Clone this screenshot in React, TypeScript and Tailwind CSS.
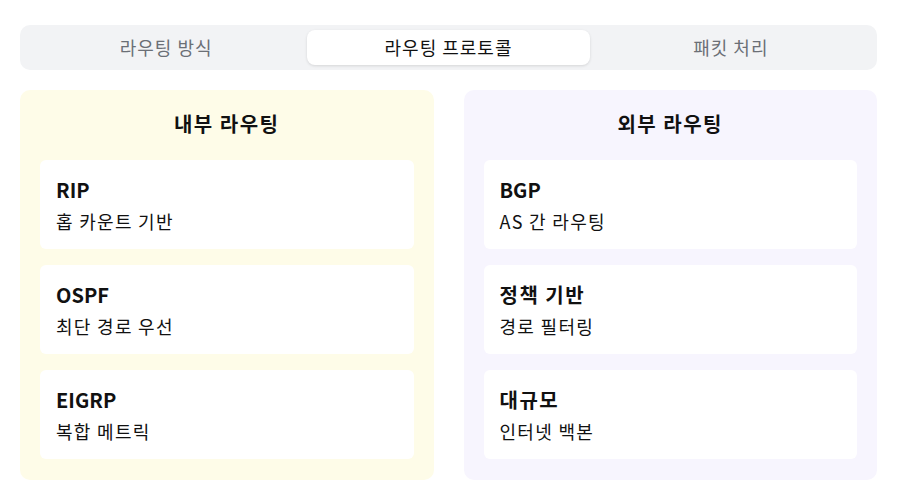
const TABS = ["라우팅 방식", "라우팅 프로토콜", "패킷 처리"];

const PANELS = [
  {
    title: "내부 라우팅",
    bg: "bg-[#fefce8]",
    items: [
      { name: "RIP", desc: "홉 카운트 기반" },
      { name: "OSPF", desc: "최단 경로 우선" },
      { name: "EIGRP", desc: "복합 메트릭" },
    ],
  },
  {
    title: "외부 라우팅",
    bg: "bg-[#f7f5fe]",
    items: [
      { name: "BGP", desc: "AS 간 라우팅" },
      { name: "정책 기반", desc: "경로 필터링" },
      { name: "대규모", desc: "인터넷 백본" },
    ],
  },
];

// hangul in Noto CJK KR runs a bit narrower than the reference font
const isHangul = (s: string) => /[가-힣]/.test(s);

export default function App() {
  const active = 1;
  return (
    <div
      className="min-h-screen bg-white px-5 pt-[25px] text-[#111]"
      style={{ fontFamily: '"Noto Sans CJK KR", "Noto Sans", sans-serif' }}
    >
      {/* tabs */}
      <div className="grid h-[45px] grid-cols-3 rounded-[10px] bg-[#f2f3f5] p-[5px]">
        {TABS.map((t, i) => (
          <div
            key={t}
            className={
              i === active
                ? "flex items-center justify-center rounded-lg bg-white text-[18px] tracking-[1px] text-[#111] shadow-[0_1px_3px_rgba(0,0,0,0.12)]"
                : "flex items-center justify-center text-[18px] tracking-[1px] text-[#6b6f76]"
            }
          >
            {t}
          </div>
        ))}
      </div>

      {/* panels */}
      <div className="mt-5 grid grid-cols-2 gap-[30px]">
        {PANELS.map((p) => (
          <div key={p.title} className={`rounded-[10px] px-5 pt-5 pb-[21px] ${p.bg}`}>
            <h3 className="mb-[22px] text-center text-[20px] leading-[28px] font-bold tracking-[1.5px]">
              {p.title}
            </h3>
            <div className="flex flex-col gap-4">
              {p.items.map((it) => (
                <div key={it.name} className="rounded-md bg-white px-4 pt-4 pb-[15px]">
                  <div
                    className={
                      isHangul(it.name)
                        ? "text-[20px] leading-[28px] font-bold tracking-[1.5px]"
                        : "text-[20px] leading-[28px] font-bold"
                    }
                  >
                    {it.name}
                  </div>
                  <div className="mt-[5px] text-[18px] leading-[25px] tracking-[1.3px]">
                    {it.desc}
                  </div>
                </div>
              ))}
            </div>
          </div>
        ))}
      </div>
    </div>
  );
}
